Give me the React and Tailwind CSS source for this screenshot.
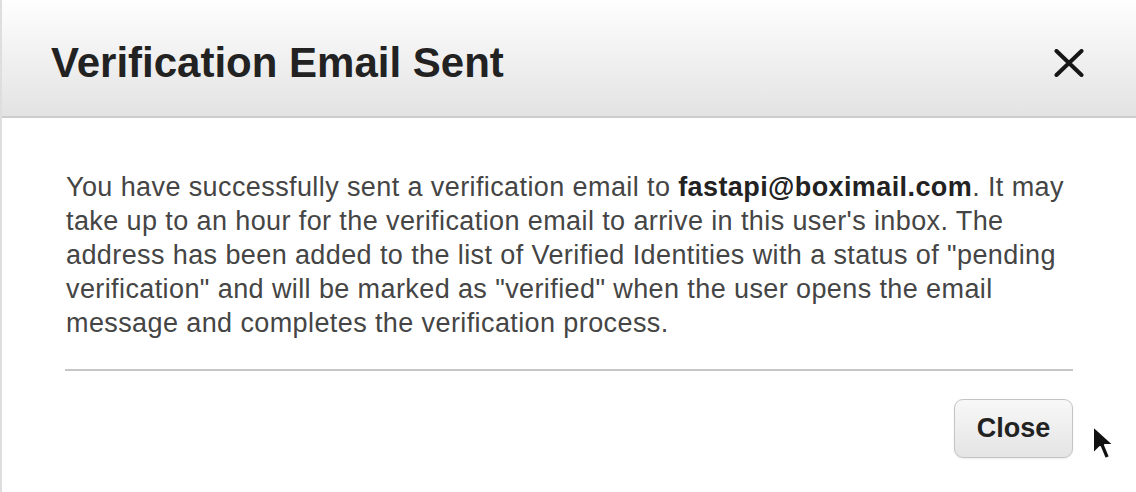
const Cursor = () => (
  <svg width="26" height="40" viewBox="0 0 26 40" className="absolute left-[1089px] top-[424px]">
    <path
      d="M2 2 L2 30 L9 23 L14 35 L19 33 L14 21 L23 21 Z"
      fill="#111"
      stroke="#fff"
      strokeWidth="2"
      strokeLinejoin="round"
    />
  </svg>
);

const CloseIcon = () => (
  <svg width="30" height="28" viewBox="0 0 30 28">
    <path d="M2.5 2 L27.5 26 M27.5 2 L2.5 26" stroke="#161616" strokeWidth="4" strokeLinecap="round" />
  </svg>
);

const App = () => {
  return (
    <div className="relative w-[1136px] h-[492px] overflow-hidden bg-white font-['Liberation_Sans',Arial,sans-serif] border-l-2 border-[#dedede]">
      <div className="h-[118px] bg-gradient-to-b from-[#fefefe] to-[#e3e3e3] border-b-2 border-[#cdcdcd] flex items-start justify-between pl-[49px] pr-[52px] pt-[39px]">
        <h1 className="text-[42px] leading-[47px] font-bold text-[#222]">Verification Email Sent</h1>
        <button className="mt-[10px]">
          <CloseIcon />
        </button>
      </div>

      <div className="pl-[63px] pr-[63px] pt-[52px]">
        <p className="text-[27px] leading-[34px] tracking-[0.4px] text-[#454545] pl-[1px]">
          You have successfully sent a verification email to{" "}
          <span className="font-bold text-[#222]">fastapi@boximail.com</span>. It may
          <br />
          take up to an hour for the verification email to arrive in this user's inbox. The
          <br />
          address has been added to the list of Verified Identities with a status of "pending
          <br />
          verification" and will be marked as "verified" when the user opens the email
          <br />
          message and completes the verification process.
        </p>
        <div className="mt-[29px] h-[2px] bg-[#c6c6c6]"></div>
        <div className="flex justify-end pt-[28px]">
          <button className="w-[119px] h-[59px] rounded-[9px] border border-[#c4c4c4] bg-gradient-to-b from-[#f8f8f8] to-[#e4e4e4] shadow-[0_1px_2px_rgba(0,0,0,0.08)] text-[27px] font-bold text-[#222]">
            Close
          </button>
        </div>
      </div>

      <Cursor />
    </div>
  );
};

export default App;
